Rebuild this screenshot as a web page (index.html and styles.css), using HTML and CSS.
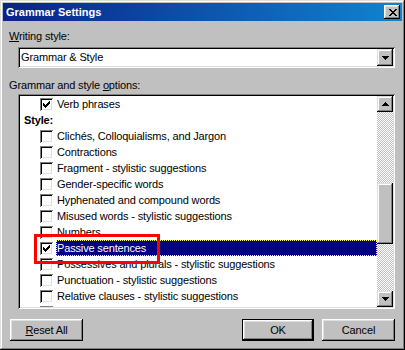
FILE: index.html
```html
<!DOCTYPE html>
<html lang="en">
<head>
  <meta charset="UTF-8">
  <title>Grammar Settings</title>
  <link rel="stylesheet" href="styles.css">
</head>
<body>
  <div class="window">
    <div class="titlebar">
      <span class="title">Grammar Settings</span>
      <div class="close-btn">
        <svg width="8" height="7" viewBox="0 0 8 7"><path d="M0 0h2v1h-2z M6 0h2v1h-2z M1 1h2v1h-2z M5 1h2v1h-2z M2 2h4v1h-4z M3 3h2v1h-2z M2 4h4v1h-4z M1 5h2v1h-2z M5 5h2v1h-2z M0 6h2v1h-2z M6 6h2v1h-2z" fill="#000"/></svg>
      </div>
    </div>

    <div class="content">
      <div class="label"><u>W</u>riting style:</div>
      <div class="combo">
        <span class="combo-text">Grammar &amp; Style</span>
        <div class="arrow-btn">
          <svg width="7" height="4" viewBox="0 0 7 4"><path d="M0 0h7v1h-7z M1 1h5v1h-5z M2 2h3v1h-3z M3 3h1v1h-1z" fill="#000"/></svg>
        </div>
      </div>

      <div class="label label-options">Grammar and style <u>o</u>ptions:</div>
      <div class="listbox">
        <div class="list-items">
          <div class="item"><span class="check checked"><svg width="7" height="7" viewBox="0 0 7 7"><path d="M6 0h1v1h-1z M5 1h2v1h-2z M0 2h1v1h-1z M4 2h3v1h-3z M0 3h2v1h-2z M3 3h3v1h-3z M0 4h5v1h-5z M1 5h3v1h-3z M2 6h1v1h-1z" fill="#000"/></svg></span><span class="text">Verb phrases</span></div>
          <div class="item heading">Style:</div>
          <div class="item"><span class="check"></span><span class="text">Clichés, Colloquialisms, and Jargon</span></div>
          <div class="item"><span class="check"></span><span class="text">Contractions</span></div>
          <div class="item"><span class="check"></span><span class="text">Fragment - stylistic suggestions</span></div>
          <div class="item"><span class="check"></span><span class="text">Gender-specific words</span></div>
          <div class="item"><span class="check"></span><span class="text">Hyphenated and compound words</span></div>
          <div class="item"><span class="check"></span><span class="text">Misused words - stylistic suggestions</span></div>
          <div class="item"><span class="check"></span><span class="text">Numbers</span></div>
          <div class="item selected"><span class="check checked"><svg width="7" height="7" viewBox="0 0 7 7"><path d="M6 0h1v1h-1z M5 1h2v1h-2z M0 2h1v1h-1z M4 2h3v1h-3z M0 3h2v1h-2z M3 3h3v1h-3z M0 4h5v1h-5z M1 5h3v1h-3z M2 6h1v1h-1z" fill="#000"/></svg></span><span class="text">Passive sentences</span></div>
          <div class="item"><span class="check"></span><span class="text">Possessives and plurals - stylistic suggestions</span></div>
          <div class="item"><span class="check"></span><span class="text">Punctuation - stylistic suggestions</span></div>
          <div class="item"><span class="check"></span><span class="text">Relative clauses - stylistic suggestions</span></div>
          <div class="item"><span class="check"></span></div>
        </div>
        <div class="scrollbar">
          <div class="arrow-btn scroll-btn">
            <svg width="7" height="4" viewBox="0 0 7 4"><path d="M3 0h1v1h-1z M2 1h3v1h-3z M1 2h5v1h-5z M0 3h7v1h-7z" fill="#000"/></svg>
          </div>
          <div class="track">
            <div class="thumb"></div>
          </div>
          <div class="arrow-btn scroll-btn">
            <svg width="7" height="4" viewBox="0 0 7 4"><path d="M0 0h7v1h-7z M1 1h5v1h-5z M2 2h3v1h-3z M3 3h1v1h-1z" fill="#000"/></svg>
          </div>
        </div>
      </div>

      <div class="buttons">
        <div class="btn reset-btn"><span><u>R</u>eset All</span></div>
        <div class="spacer"></div>
        <div class="btn default-btn"><span>OK</span></div>
        <div class="btn"><span>Cancel</span></div>
      </div>
    </div>

    <div class="annotation"></div>
  </div>
</body>
</html>
```

FILE: styles.css
```css
* {
  margin: 0;
  padding: 0;
  box-sizing: border-box;
}
html, body {
  width: 405px;
  height: 350px;
  overflow: hidden;
  background: #c0c0c0;
  font-family: 'Liberation Sans', Arial, sans-serif;
  font-size: 11px;
  letter-spacing: -0.15px;
  color: #000;
}
u {
  text-decoration: underline;
  text-underline-offset: 1px;
}
.window {
  position: relative;
  width: 405px;
  height: 350px;
  padding: 3px;
  background: #c0c0c0;
  box-shadow: inset -1px -1px #000, inset 1px 1px #dfdfdf, inset -2px -2px #808080, inset 2px 2px #fff;
  display: flex;
  flex-direction: column;
}
.titlebar {
  height: 18px;
  display: flex;
  align-items: center;
  justify-content: space-between;
  padding: 0 2px 0 3px;
  background: linear-gradient(to right, #0a2288, #1084d0);
}
.title {
  color: #fff;
  font-weight: bold;
  font-size: 11px;
  line-height: 13px;
  letter-spacing: 0;
}
.close-btn {
  width: 16px;
  height: 14px;
  display: flex;
  align-items: center;
  justify-content: center;
  padding-left: 1px;
  background: #c0c0c0;
  box-shadow: inset -1px -1px #000, inset 1px 1px #fff, inset -2px -2px #808080, inset 2px 2px #dfdfdf;
}
.close-btn svg, .arrow-btn svg, .check svg {
  display: block;
  shape-rendering: crispEdges;
}
.content {
  flex: 1;
  display: flex;
  flex-direction: column;
  padding: 0 7px 0 6px;
}
.label {
  line-height: 13px;
  margin-top: 9px;
}
.label-options {
  margin-top: 11px;
}
.combo {
  margin: 4px 0 0 9px;
  height: 21px;
  background: #fff;
  display: flex;
  align-items: center;
  justify-content: space-between;
  padding: 2px;
  box-shadow: inset 1px 1px #808080, inset -1px -1px #fff, inset 2px 2px #000, inset -2px -2px #dfdfdf;
}
.combo-text {
  padding-left: 1px;
  line-height: 13px;
}
.arrow-btn {
  width: 16px;
  height: 17px;
  display: flex;
  align-items: center;
  justify-content: center;
  background: #c0c0c0;
  box-shadow: inset -1px -1px #000, inset 1px 1px #dfdfdf, inset -2px -2px #808080, inset 2px 2px #fff;
}
.listbox {
  margin: 2px 0 0 9px;
  height: 215px;
  background: #fff;
  display: flex;
  padding: 2px;
  box-shadow: inset 1px 1px #808080, inset -1px -1px #fff, inset 2px 2px #000, inset -2px -2px #dfdfdf;
}
.list-items {
  flex: 1;
  overflow: hidden;
}
.item {
  height: 16px;
  display: flex;
  align-items: center;
  padding-left: 20px;
  white-space: nowrap;
}
.item.heading {
  padding-left: 4px;
  font-weight: bold;
}
.check {
  width: 13px;
  height: 13px;
  flex-shrink: 0;
  margin-right: 3px;
  background: #fff;
  display: flex;
  align-items: center;
  justify-content: center;
  box-shadow: inset 1px 1px #808080, inset -1px -1px #fff, inset 2px 2px #000, inset -2px -2px #dfdfdf;
}
.text {
  height: 16px;
  line-height: 14px;
  border: 1px solid transparent;
}
.item.selected .text {
  flex: 1;
  background: #000080;
  color: #fff;
  border: 1px dotted #ffff60;
}
.scrollbar {
  width: 16px;
  display: flex;
  flex-direction: column;
}
.scroll-btn {
  height: 16px;
}
.track {
  flex: 1;
  background: repeating-conic-gradient(#fff 0 25%, #c0c0c0 0 50%) 0 0 / 2px 2px;
}
.thumb {
  margin-top: 71px;
  height: 61px;
  background: #c0c0c0;
  box-shadow: inset -1px -1px #000, inset 1px 1px #dfdfdf, inset -2px -2px #808080, inset 2px 2px #fff;
}
.buttons {
  margin: 10px 0 0 1px;
  display: flex;
  gap: 8px;
}
.spacer {
  flex: 1;
}
.btn {
  width: 73px;
  height: 22px;
  display: flex;
  align-items: center;
  justify-content: center;
  background: #c0c0c0;
  box-shadow: inset -1px -1px #000, inset 1px 1px #fff, inset -2px -2px #808080, inset 2px 2px #dfdfdf;
}
.default-btn {
  width: 72px;
  border: 1px solid #000;
}
.annotation {
  position: absolute;
  left: 34px;
  top: 234px;
  width: 126px;
  height: 30px;
  border: 3px solid #ff0000;
}
```
